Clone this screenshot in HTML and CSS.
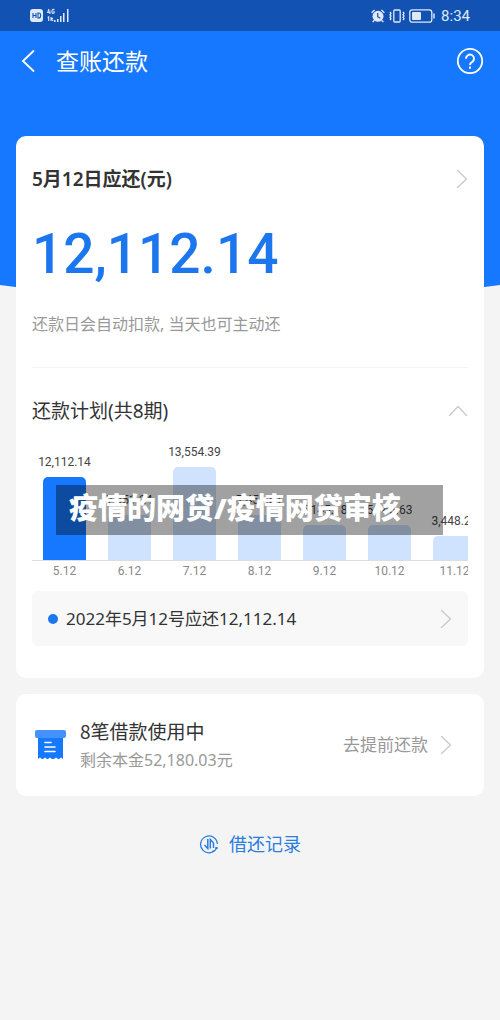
FILE: index.html
```html
<!DOCTYPE html>
<html lang="zh-CN">
<head>
<meta charset="utf-8">
<meta name="viewport" content="width=device-width, initial-scale=1">
<title>查账还款</title>
<link rel="stylesheet" href="styles.css">
</head>
<body>
<div class="status">
  <div class="status-group">
    <svg width="13" height="13" viewBox="0 0 13 13"><rect width="13" height="13" rx="3" fill="#dfe9f9"/><path d="M3 4v5M6 4v5M3 6.500h3M8 4v5h.6a2 2 0 0 0 2-2V6a2 2 0 0 0-2-2z" fill="none" stroke="#1152b2" stroke-width="1.100"/></svg>
    <svg width="22" height="15" viewBox="0 0 22 15"><g fill="none" stroke="#dfe9f9" stroke-width="1.100"><path d="M2 1L.7 4.500h2.800M2.900 2.500V6M7.300 2Q7 1.400 6 1.400Q4.900 1.400 4.900 3.500Q4.900 5.500 6 5.500Q7.300 5.500 7.300 3.700H6.200M.7 9.800l1-.8v4M4 9v4M4 11.500l2-1.500M4.500 11l1.500 2"/></g><path d="M7 12h1.500v2H7zM10 11h1.500v3H10zM13 8h1.500v6H13zM16 5h1.500v9H16zM20 1h1.500v13H20z" fill="#dfe9f9"/></svg>
  </div>
  <div class="status-group">
    <svg width="14" height="14" viewBox="0 0 14 14"><circle cx="7" cy="7.300" r="5.500" fill="#dfe9f9"/><path d="M.6 3.700L3.600 1M13.400 3.700L10.400 1M3 11.500L1.700 13M11 11.500l1.300 1.500" stroke="#dfe9f9" stroke-width="1.400"/><path d="M6.700 4v3.700l2.600 1.500" fill="none" stroke="#1152b2" stroke-width="1.200"/></svg>
    <svg width="16" height="14" viewBox="0 0 16 14"><g fill="none" stroke="#dfe9f9" stroke-width="1.300"><rect x="4.800" y="1" width="6.400" height="12" rx="1"/><path d="M1 3l1 1.300-1 1.400 1 1.300-1 1.400 1 1.300-1 1.300M14 3l1 1.300-1 1.400 1 1.300-1 1.400 1 1.300-1 1.300"/></g></svg>
    <svg width="26" height="14" viewBox="0 0 26 14"><rect x=".8" y=".8" width="22" height="12.400" rx="2.500" fill="none" stroke="#dfe9f9" stroke-width="1.300"/><rect x="3" y="3" width="9" height="8" rx="1" fill="#dfe9f9"/><path d="M25 4.500v5" stroke="#dfe9f9" stroke-width="1.500"/></svg>
    <span class="clock">8:34</span>
  </div>
</div>

<header class="hero">
  <div class="titlebar">
    <button class="icon-button" aria-label="返回"><svg width="14" height="22" viewBox="0 0 14 22"><path d="M12.500 1L2 11l10.500 10" fill="none" stroke="#fff" stroke-width="1.800" stroke-linecap="round"/></svg></button>
    <h1 class="title">查账还款</h1>
    <button class="icon-button" aria-label="帮助"><svg width="28" height="28" viewBox="0 0 28 28" fill="none" stroke="#fff"><circle cx="14" cy="14" r="12.200" stroke-width="1.800"/><path d="M10 11.700a4 4 0 1 1 6.200 3.200Q14 16.200 14 18" stroke-width="1.900"/><path d="M14 19.600v2.100" stroke-width="2"/></svg></button>
  </div>
  <svg class="curve" viewBox="0 0 500 12" preserveAspectRatio="none" aria-hidden="true"><path d="M0 0Q250 36 500 0z" fill="#1678fe"/></svg>
</header>

<main class="content">
  <section class="card bill">
    <button class="row due">
      <span class="due-title">5月12日应还(元)</span>
      <svg width="12" height="20" viewBox="0 0 12 20"><path d="M1.500 1.500L10.500 10l-9 8.500" class="chevron"/></svg>
    </button>
    <div class="amount">12,112.14</div>
    <p class="hint">还款日会自动扣款, 当天也可主动还</p>
    <button class="row plan">
      <span>还款计划(共8期)</span>
      <svg width="20" height="12" viewBox="0 0 20 12"><path d="M1.500 10.500L10 1.500l8.500 9" class="chevron"/></svg>
    </button>
    <div class="chart">
      <div class="plot">
        <div class="bar-col"><span>12,112.14</span><i class="bar active" style="height:83px"></i></div>
        <div class="bar-col"><span>7,451.24</span><i class="bar" style="height:45px"></i></div>
        <div class="bar-col"><span>13,554.39</span><i class="bar" style="height:93px"></i></div>
        <div class="bar-col"><span>7,451.81</span><i class="bar" style="height:45px"></i></div>
        <div class="bar-col"><span>5,145.18</span><i class="bar" style="height:35px"></i></div>
        <div class="bar-col"><span>5,145.63</span><i class="bar" style="height:35px"></i></div>
        <div class="bar-col"><span>3,448.28</span><i class="bar" style="height:24px"></i></div>
      </div>
      <div class="axis"><span>5.12</span><span>6.12</span><span>7.12</span><span>8.12</span><span>9.12</span><span>10.12</span><span>11.12</span></div>
      <div class="caption">疫情的网贷/疫情网贷审核</div>
    </div>
    <button class="row detail">
      <i class="dot"></i>
      <span class="grow">2022年5月12号应还12,112.14</span>
      <svg width="12" height="20" viewBox="0 0 12 20"><path d="M1.500 1.500L10.500 10l-9 8.500" class="chevron"/></svg>
    </button>
  </section>

  <section class="card loans">
    <svg width="32" height="32" viewBox="0 0 32 32"><path d="M4 6h25v24l-2-1.500-2 1.500h-1l-2-1.500-2 1.500h-2l-2-1.500-2 1.500h-1l-2-1.500L9 30H8l-2-1.500L4 30z" fill="#1677ff"/><rect x="1" y="1" width="31" height="8" rx="2" fill="#4592fe"/><path d="M11 13.500h6M11 18h10M11 22.500h10" stroke="#fff" stroke-width="1.600" stroke-linecap="round"/></svg>
    <div class="grow">
      <div class="loan-title">8笔借款使用中</div>
      <div class="loan-sub">剩余本金52,180.03元</div>
    </div>
    <button class="prepay">去提前还款<svg width="12" height="20" viewBox="0 0 12 20"><path d="M1.500 1.500L10.500 10l-9 8.500" class="chevron"/></svg></button>
  </section>

  <a class="records" href="#records">
    <svg width="20" height="20" viewBox="0 0 20 20" fill="none" stroke="#2b7de0" stroke-width="1.300"><path d="M17.700 13.800A8.400 8.400 0 1 1 18.400 10M13 17.800a8.400 8.400 0 0 0 2-1.300"/><path d="M8.800 5v9.500L5.500 11M11.300 14.500V5.500l3.200 3.500M14.500 9v5" stroke-width="1.500"/><path d="M16.200 14h2.500" stroke-width="1.800"/></svg>
    借还记录
  </a>
</main>
</body>
</html>
```
FILE: styles.css
```css
* { box-sizing: border-box; }
body {
  margin: 0;
  min-height: 100vh;
  background: #f4f4f4;
  color: #333;
  font-family: "Noto Sans", "Noto Sans CJK SC", sans-serif;
}
button {
  border: 0;
  padding: 0;
  background: none;
  color: inherit;
  font: inherit;
  text-align: left;
}
svg { display: block; flex: none; }
.grow { flex: 1; }
.chevron {
  fill: none;
  stroke: #ccc;
  stroke-width: 1.5px;
  stroke-linecap: round;
  stroke-linejoin: round;
}

.status {
  display: flex;
  justify-content: space-between;
  align-items: center;
  height: 31px;
  padding: 0 30px;
  background: #1152b2;
}
.status-group { display: flex; align-items: center; gap: 4px; }
.clock {
  margin-left: 2px;
  color: #dfe9f9;
  font: 15px/20px Roboto, sans-serif;
}

.hero {
  display: flex;
  flex-direction: column;
  height: 254px;
  background: #1678fe;
}
.titlebar {
  display: flex;
  align-items: center;
  height: 60px;
  padding: 0 16px 0 21px;
}
.title {
  flex: 1;
  margin: 0 0 0 21px;
  color: #fff;
  font-size: 23px;
  font-weight: 400;
  line-height: 32px;
}
.curve {
  width: 100%;
  height: 12px;
  margin-top: auto;
  transform: translateY(100%);
}

.content {
  position: relative;
  display: flex;
  flex-direction: column;
  gap: 16px;
  margin-top: -149px;
  padding: 0 16px;
}
.card { border-radius: 10px; background: #fff; }
.bill { padding: 28px 16px 32px; }
.row {
  display: flex;
  align-items: center;
  justify-content: space-between;
  width: 100%;
}
.due { line-height: 30px; }
.due-title { font-size: 19px; font-weight: 600; }
.amount {
  margin-top: 20px;
  color: #1c77ee;
  font: 500 55px/80px Roboto, sans-serif;
}
.hint {
  margin: 18px 0 0;
  padding-bottom: 31px;
  border-bottom: 1px solid #f5f5f5;
  color: #999;
  font-size: 16px;
  line-height: 24px;
}
.plan { padding: 28px 0 4px; font-size: 19px; line-height: 30px; }

.chart { position: relative; overflow: hidden; }
.plot {
  display: flex;
  height: 131px;
  border-bottom: 1px solid #ddd;
}
.bar-col {
  display: flex;
  flex: 0 0 65px;
  flex-direction: column;
  align-items: center;
  justify-content: flex-end;
  gap: 6px;
  color: #444;
  font: 12px/18px Roboto, sans-serif;
}
.bar { width: 43px; border-radius: 5px 5px 0 0; background: #cfe3ff; }
.bar.active { background: #1677ff; }
.axis {
  display: flex;
  color: #888;
  font: 12px/20px Roboto, sans-serif;
}
.axis span { flex: 0 0 65px; text-align: center; }
.caption {
  position: absolute;
  top: 55px;
  left: 24px;
  right: 25px;
  padding: 0 0 4px 13px;
  background: rgba(0, 0, 0, .37);
  color: #fff;
  font-size: 29px;
  font-weight: 900;
  line-height: 46px;
  white-space: nowrap;
}

.detail {
  gap: 8px;
  margin-top: 10px;
  padding: 12px 16px;
  border-radius: 6px;
  background: #f8f8f8;
  font-size: 17px;
  line-height: 31px;
}
.dot { width: 10px; height: 10px; border-radius: 50%; background: #1c77ee; }

.loans {
  display: flex;
  align-items: center;
  gap: 14px;
  padding: 22px 32px 22px 18px;
}
.loan-title {
  font-family: "Noto Sans CJK SC", sans-serif;
  font-size: 19px;
  line-height: 30px;
}
.loan-sub { color: #999; font-size: 16px; line-height: 28px; }
.prepay {
  display: flex;
  align-items: center;
  gap: 12px;
  color: #999;
  font-size: 17px;
  line-height: 24px;
}

.records {
  display: flex;
  align-items: center;
  justify-content: center;
  gap: 10px;
  margin-top: 16px;
  color: #2b7de0;
  font-size: 18px;
  line-height: 32px;
  text-decoration: none;
}
```
